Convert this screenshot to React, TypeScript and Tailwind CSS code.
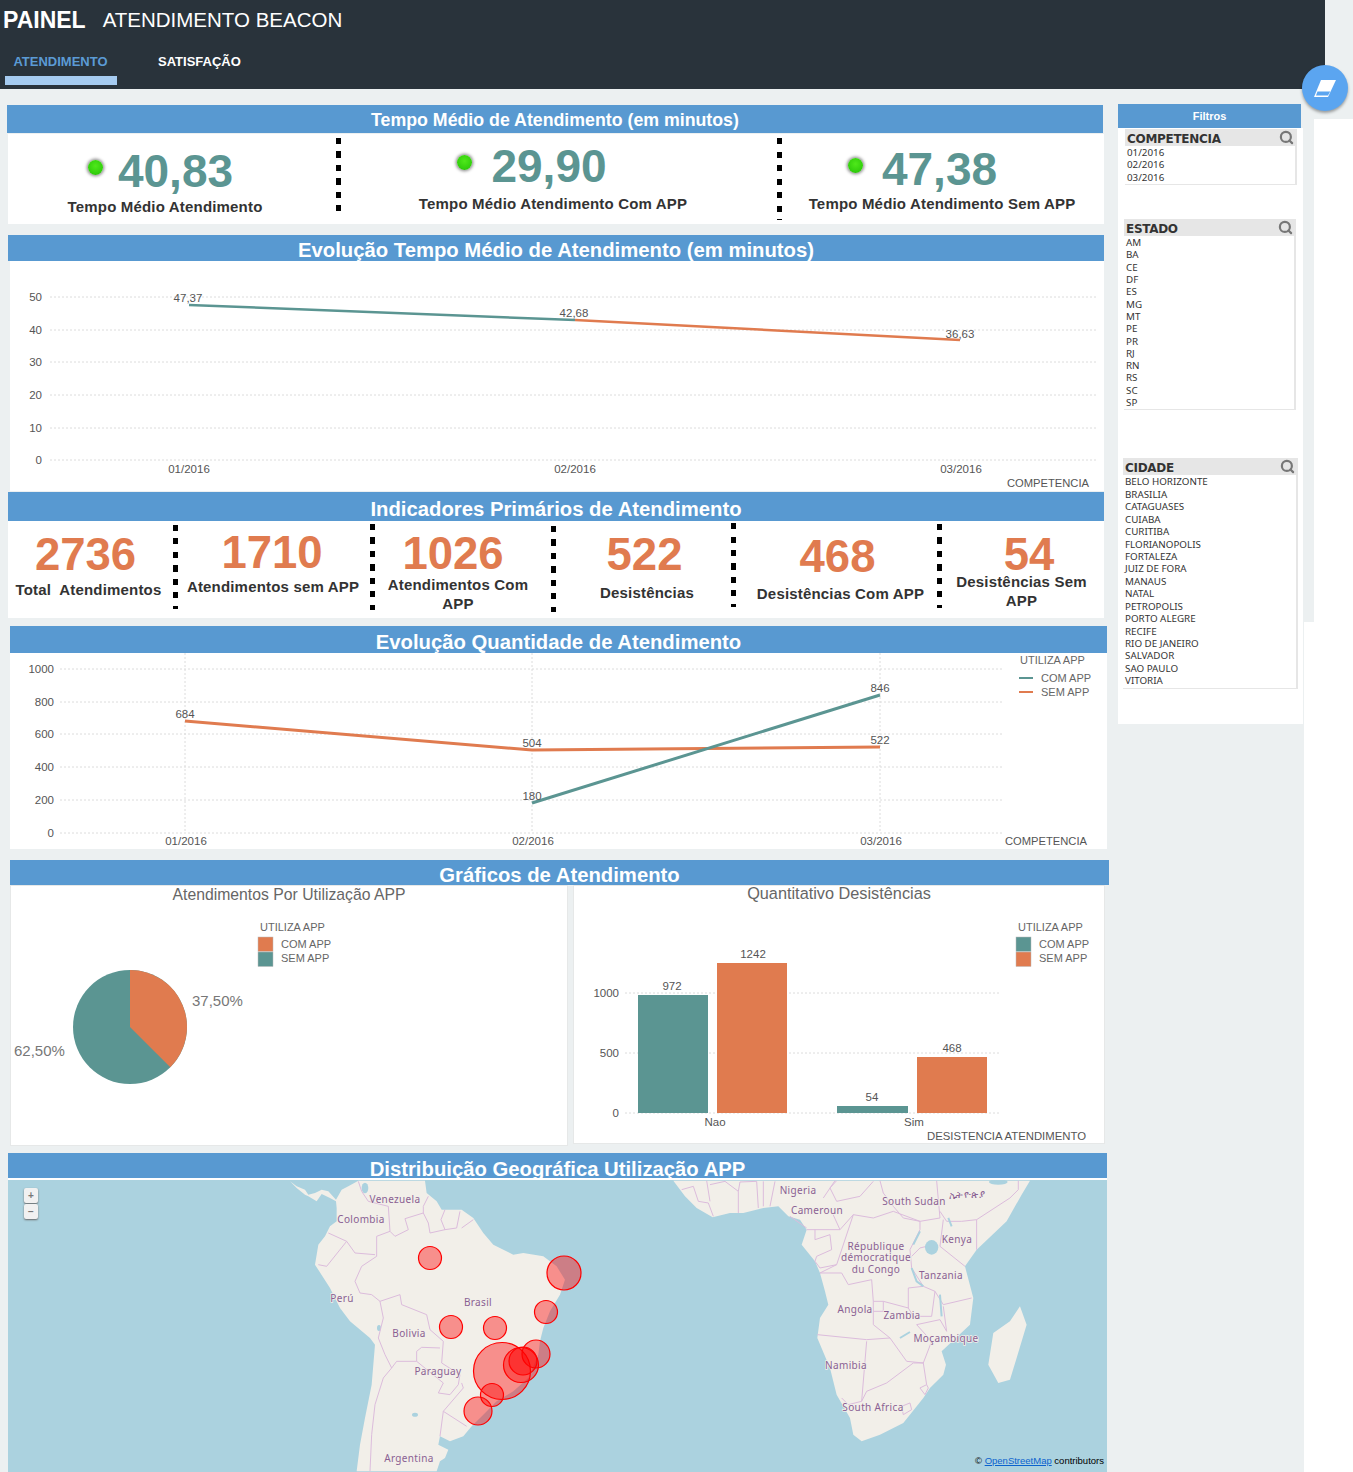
import { Search } from "lucide-react";

const TEAL = "#5b9592";
const ORANGE = "#e07b4f";
const WATER = "#abd2df";

const ESTADOS = ["AM", "BA", "CE", "DF", "ES", "MG", "MT", "PE", "PR", "RJ", "RN", "RS", "SC", "SP"];
const CIDADES = [
	"BELO HORIZONTE", "BRASILIA", "CATAGUASES", "CUIABA", "CURITIBA", "FLORIANOPOLIS", "FORTALEZA",
	"JUIZ DE FORA", "MANAUS", "NATAL", "PETROPOLIS", "PORTO ALEGRE", "RECIFE", "RIO DE JANEIRO",
	"SALVADOR", "SAO PAULO", "VITORIA",
];

const CIRCLES = [
	[430, 1258, 11.5], [564, 1273, 17], [546, 1312, 11.5], [451, 1327, 11.5], [495, 1328, 11.5],
	[536, 1354, 14], [502, 1371, 28.5], [521, 1365, 17.5], [523, 1361, 14], [492, 1395, 11.5], [478, 1411, 14],
];

const MAP_LABELS: [string, number, number][] = [
	["Venezuela", 395, 1199], ["Colombia", 361, 1219], ["Perú", 342, 1298], ["Brasil", 478, 1302],
	["Bolivia", 409, 1333], ["Paraguay", 438, 1371], ["Argentina", 409, 1458], ["Nigeria", 798, 1190],
	["Cameroun", 817, 1210], ["South Sudan", 914, 1201], ["ኢትዮጵያ", 967, 1194], ["Kenya", 957, 1239],
	["République", 876, 1246], ["démocratique", 876, 1257], ["du Congo", 876, 1269], ["Tanzania", 941, 1275],
	["Angola", 855, 1309], ["Zambia", 902, 1315], ["Moçambique", 946, 1338], ["Namibia", 846, 1365],
	["South Africa", 873, 1407],
];

const SOUTH_AMERICA =
	"M30 10 50 25 75 35 85 50 105 45 125 35 145 40 168 65 185 35 205 25 235 8 435 8 440 45 470 70 485 95 545 95 580 120 610 165 640 200 700 230 730 225 790 235 830 265 855 305 840 350 810 400 790 450 780 490 775 530 745 600 700 640 650 670 610 710 575 745 550 775 510 790 480 775 475 800 505 815 495 840 480 850 470 880 230 880 240 800 255 720 275 620 285 500 270 480 210 430 180 390 150 330 105 260 115 200 135 175 150 145 170 130 170 90 168 70 150 60 125 48 110 70 85 55 75 50 50 30Z";

const SA_BORDERS = [
	"M235 10 245 40 265 70 325 85 330 160 345 175 385 155 375 122 430 105 445 135 450 165 495 155 483 125 495 95",
	"M430 105 430 85 445 55M495 155 530 150 540 100M545 150 580 125",
	"M330 160 290 175 290 235 245 265 225 310 240 345 275 350 300 370 360 350 365 380 440 410 450 455 490 490 485 555 540 590 535 620 510 650 475 645 490 615 410 550 410 520 425 508 480 510",
	"M145 165 200 190 225 225 285 230M115 260 140 265 200 190",
	"M300 370 310 420 295 480 315 530 335 570 350 550 410 550M335 570 310 600 285 680 275 770 270 880",
	"M545 615 550 630 490 700 560 745M490 700 480 775",
];

const AFRICA =
	"M40 8 75 55 110 90 158 118 210 105 250 105 310 90 355 85 385 115 420 125 440 155 425 200 465 250 480 285 495 340 505 380 480 420 472 480 510 570 530 650 570 720 580 770 605 790 660 770 730 735 790 660 810 630 850 590 858 560 845 520 930 440 940 360 915 265 950 215 1040 130 1085 50 1110 8Z";

const AF_BORDERS = [
	"M65 35 100 25 115 70 145 75 160 115M140 8 150 70M150 20 195 10 235 40 235 105M235 40 240 12 290 10 295 90M310 85 310 10M330 85 345 10",
	"M490 60 525 8M530 70 510 30 530 8M530 70 600 55 640 10M660 8 670 45 700 85 730 120 780 130 840 120 830 8M840 100 860 130 905 130 950 125 1050 60 1075 35 1075 8",
	"M440 155 510 155 540 155 580 110 640 120 700 100 780 130M515 100 540 155M390 115 440 150",
	"M465 155 465 185 510 170 515 215 470 235 465 250 480 270 530 260 580 110M530 260 480 285 545 285 565 320 635 305 640 370 670 370 745 390 745 330 790 325 755 270 750 215 780 155 780 130",
	"M850 125 840 205 915 265M950 125 950 215M800 205 780 210 755 235",
	"M790 325 825 340 850 380 935 360M745 390 760 415 815 415 825 340",
	"M472 470 620 485 690 480 640 440 640 370M640 400 670 400 670 370",
	"M620 490 605 670 620 640 680 615 760 555 790 555 815 490 770 440 840 425 860 460 850 385",
	"M690 480 740 550 790 555 800 620 780 630 795 650 805 630 800 620",
	"M545 660 565 680 605 670M725 685 750 675 755 695 730 710 725 685",
];

function TitleBar({ title, className }: { title: string; className: string }) {
	return (
		<div
			className={`flex justify-center overflow-hidden bg-[#5899d1] font-bold text-white leading-[24px] ${className}`}
		>
			{title}
		</div>
	);
}

function Separator({ className }: { className: string }) {
	return (
		<div
			className={`w-[5px] shrink-0 bg-[repeating-linear-gradient(to_bottom,#000_0,#000_6px,transparent_6px,transparent_13.5px)] ${className}`}
		/>
	);
}

function Led() {
	return (
		<div className="mb-[8px] flex h-[18px] w-[18px] shrink-0 items-center justify-center">
			<div className="h-[15px] w-[15px] rounded-full bg-[radial-gradient(circle_at_50%_40%,#4fe81a,#32cf0c_65%,#1f8f08)] shadow-[0_0_3px_1.5px_#999]" />
		</div>
	);
}

function TimeKpi({
	value,
	label,
	className,
	labelClass,
	rowClass,
}: {
	value: string;
	label: string;
	className: string;
	labelClass: string;
	rowClass: string;
}) {
	return (
		<div className={`flex flex-col items-center ${className}`}>
			<div className={`flex h-[50px] items-center ${rowClass}`}>
				<Led />
				<span className="text-[46px] font-bold leading-[50px] text-[#5b9592]">{value}</span>
			</div>
			<div className={`text-[15px] font-bold leading-[18px] tracking-[0.18px] text-[#333] ${labelClass}`}>
				{label}
			</div>
		</div>
	);
}

function CountKpi({
	value,
	label,
	className,
	valueClass,
	labelClass,
}: {
	value: string;
	label: string;
	className: string;
	valueClass: string;
	labelClass: string;
}) {
	return (
		<div className={`flex shrink-0 flex-col items-center text-center ${className}`}>
			<div className={`text-[45.5px] font-bold leading-[50px] text-[#e07b4f] ${valueClass}`}>{value}</div>
			<div className={`text-[15px] font-bold leading-[19px] tracking-[0.18px] text-[#333] ${labelClass}`}>
				{label}
			</div>
		</div>
	);
}

function FilterList({
	title,
	items,
	className,
	rowClass,
}: {
	title: string;
	items: string[];
	className: string;
	rowClass: string;
}) {
	return (
		<div className={`border-b border-r-2 border-[#e6e6e6] ${className}`}>
			<div className="flex h-[17px] items-center justify-between bg-[#e6e6e6] pl-[2px] pr-px">
				<span className="pt-[2px] font-['DejaVu_Sans'] text-[12px] font-bold leading-none tracking-[-0.3px] text-[#333]">
					{title}
				</span>
				<Search size={15} strokeWidth={3.5} className="text-[#777]" />
			</div>
			<div className="pl-[2px] pt-px font-['Noto_Sans'] text-[9.8px] text-[#333]">
				{items.map((item) => (
					<div key={item} className={rowClass}>
						{item}
					</div>
				))}
			</div>
		</div>
	);
}

function Grid({ ys, x1, x2 }: { ys: number[]; x1: number; x2: number }) {
	return (
		<g stroke="#dcdcdc" strokeDasharray="2 2">
			{ys.map((y) => (
				<line key={y} x1={x1} x2={x2} y1={y} y2={y} />
			))}
		</g>
	);
}

function Legend({ x, swatches }: { x: number; swatches: [string, string][] }) {
	return (
		<g fontSize="11" fill="#666">
			<text x={x + 2} y="931">
				UTILIZA APP
			</text>
			{swatches.map(([color, label], i) => (
				<g key={label}>
					<rect x={x} y={937 + i * 15} width="15" height="14.5" fill={color} stroke="#bbb" strokeWidth="0.5" />
					<text x={x + 23} y={948 + i * 14}>
						{label}
					</text>
				</g>
			))}
		</g>
	);
}

function AverageChart() {
	return (
		<svg viewBox="10 261 1094 230" className="block h-[230px] w-[1094px] font-['Liberation_Sans']" fontSize="11.5" fill="#555">
			<Grid ys={[297, 330, 362, 395, 428, 460]} x1={50} x2={1097} />
			{[["50", 297], ["40", 330], ["30", 362], ["20", 395], ["10", 428], ["0", 460]].map(([t, y]) => (
				<text key={t} x="42" y={Number(y) + 4} textAnchor="end">
					{t}
				</text>
			))}
			<line x1="189" y1="305" x2="575" y2="320" stroke={TEAL} strokeWidth="2.5" />
			<line x1="575" y1="320" x2="960" y2="340" stroke={ORANGE} strokeWidth="2.5" />
			<text x="188" y="302" textAnchor="middle">47,37</text>
			<text x="574" y="317" textAnchor="middle">42,68</text>
			<text x="960" y="338" textAnchor="middle">36,63</text>
			<text x="189" y="473" textAnchor="middle">01/2016</text>
			<text x="575" y="473" textAnchor="middle">02/2016</text>
			<text x="961" y="473" textAnchor="middle">03/2016</text>
			<text x="1089" y="487" textAnchor="end" fontSize="11.2">COMPETENCIA</text>
		</svg>
	);
}

function QuantityChart() {
	return (
		<svg viewBox="10 653 1097 196" className="block h-[196px] w-[1097px] font-['Liberation_Sans']" fontSize="11.5" fill="#555">
			<Grid ys={[669, 702, 734, 767, 800, 833]} x1={60} x2={1002} />
			<g stroke="#dcdcdc" strokeDasharray="2 2">
				<line x1="185" x2="185" y1="653" y2="833" />
				<line x1="532" x2="532" y1="653" y2="833" />
				<line x1="880" x2="880" y1="653" y2="833" />
			</g>
			{[["1000", 669], ["800", 702], ["600", 734], ["400", 767], ["200", 800], ["0", 833]].map(([t, y]) => (
				<text key={t} x="54" y={Number(y) + 4} textAnchor="end">
					{t}
				</text>
			))}
			<polyline points="185,721 532,750 880,747" fill="none" stroke={ORANGE} strokeWidth="3" />
			<line x1="532" y1="803" x2="880" y2="695" stroke={TEAL} strokeWidth="3" />
			<text x="185" y="718" textAnchor="middle">684</text>
			<text x="532" y="747" textAnchor="middle">504</text>
			<text x="532" y="800" textAnchor="middle">180</text>
			<text x="880" y="692" textAnchor="middle">846</text>
			<text x="880" y="744" textAnchor="middle">522</text>
			<text x="186" y="845" textAnchor="middle">01/2016</text>
			<text x="533" y="845" textAnchor="middle">02/2016</text>
			<text x="881" y="845" textAnchor="middle">03/2016</text>
			<text x="1087" y="845" textAnchor="end" fontSize="11.2">COMPETENCIA</text>
			<g fill="#666" fontSize="11">
				<text x="1020" y="664">UTILIZA APP</text>
				<line x1="1019" x2="1033" y1="678" y2="678" stroke={TEAL} strokeWidth="2" />
				<line x1="1019" x2="1033" y1="692" y2="692" stroke={ORANGE} strokeWidth="2" />
				<text x="1041" y="682">COM APP</text>
				<text x="1041" y="696">SEM APP</text>
			</g>
		</svg>
	);
}

function PieChart() {
	return (
		<svg viewBox="10 903 558 243" className="block h-[243px] w-[558px] font-['Liberation_Sans']">
			<Legend x={258} swatches={[[ORANGE, "COM APP"], [TEAL, "SEM APP"]]} />
			<circle cx="130" cy="1027" r="57" fill={TEAL} />
			<path d="M130 1027 L130 970 A57 57 0 0 1 170.3 1067.3 Z" fill={ORANGE} />
			<text x="192" y="1006" fontSize="15" fill="#777">37,50%</text>
			<text x="14" y="1056" fontSize="15" fill="#777">62,50%</text>
		</svg>
	);
}

function BarChart() {
	return (
		<svg viewBox="573 903 532 241" className="block h-[241px] w-[532px] font-['Liberation_Sans']" fontSize="11.5" fill="#555">
			<Grid ys={[993, 1053, 1113]} x1={625} x2={999} />
			<text x="619" y="997" textAnchor="end">1000</text>
			<text x="619" y="1057" textAnchor="end">500</text>
			<text x="619" y="1117" textAnchor="end">0</text>
			<rect x="638" y="995" width="70" height="118" fill={TEAL} />
			<rect x="717" y="963" width="70" height="150" fill={ORANGE} />
			<rect x="837" y="1106" width="71" height="7" fill={TEAL} />
			<rect x="917" y="1057" width="70" height="56" fill={ORANGE} />
			<text x="672" y="990" textAnchor="middle">972</text>
			<text x="753" y="958" textAnchor="middle">1242</text>
			<text x="872" y="1101" textAnchor="middle">54</text>
			<text x="952" y="1052" textAnchor="middle">468</text>
			<text x="715" y="1126" textAnchor="middle">Nao</text>
			<text x="914" y="1126" textAnchor="middle">Sim</text>
			<text x="1086" y="1140" textAnchor="end" fontSize="11.35">DESISTENCIA ATENDIMENTO</text>
			<Legend x={1016} swatches={[[TEAL, "COM APP"], [ORANGE, "SEM APP"]]} />
		</svg>
	);
}

function ZoomButton({ label }: { label: string }) {
	return (
		<div className="flex h-[15px] w-[14px] items-center justify-center rounded-[2px] bg-[#f1f1f1] text-[10px] font-bold leading-none text-[#777] shadow-[0_1px_2px_#666]">
			{label}
		</div>
	);
}

function WorldMap() {
	return (
		<div className="relative h-[292px] w-[1099px] overflow-hidden bg-[#abd2df]">
			<svg viewBox="8 1180 1099 292" className="block h-[292px] w-[1099px]">
				{/* America do Sul */}
				<g transform="translate(280 1178) scale(0.3333)">
					<path fill="#f2efe9" d={SOUTH_AMERICA} />
					<ellipse cx="255" cy="30" rx="10" ry="16" fill={WATER} />
					<ellipse cx="297" cy="450" rx="6" ry="9" fill={WATER} />
					<ellipse cx="405" cy="710" rx="9" ry="6" fill={WATER} />
					<g fill="none" stroke="#dcbcdc" strokeWidth="1">
						{SA_BORDERS.map((d) => (
							<path key={d} d={d} vectorEffect="non-scaling-stroke" />
						))}
					</g>
				</g>
				{/* Africa */}
				<g transform="translate(660 1178) scale(0.3333)">
					<path fill="#f2efe9" d={AFRICA} />
					<path fill="#f2efe9" d="M1080 385 1100 440 1070 540 1050 605 1015 615 985 560 1000 465 1050 430Z" />
					<ellipse cx="1015" cy="12" rx="28" ry="8" fill={WATER} />
					<g fill="none" stroke="#dcbcdc" strokeWidth="1">
						{AF_BORDERS.map((d) => (
							<path key={d} d={d} vectorEffect="non-scaling-stroke" />
						))}
					</g>
					<ellipse cx="815" cy="208" rx="20" ry="22" fill={WATER} />
					<path
						d="M755 270 770 310 790 325M840 350 845 415M865 120 875 145M720 480 750 462M780 160 760 200"
						fill="none"
						stroke={WATER}
						strokeWidth="2"
						vectorEffect="non-scaling-stroke"
					/>
				</g>
				{CIRCLES.map(([cx, cy, r]) => (
					<circle key={`${cx}-${cy}`} cx={cx} cy={cy} r={r} fill="#ff0000" fillOpacity="0.4" stroke="#ff0000" strokeWidth="1.2" />
				))}
				<g
					fontSize="10"
					fill="#8a5f93"
					textAnchor="middle"
					letterSpacing="0.35"
					stroke="#f2efe9"
					strokeWidth="1.5"
					paintOrder="stroke"
					className="font-['Noto_Sans','DejaVu_Sans',sans-serif]"
				>
					{MAP_LABELS.map(([t, x, y]) => (
						<text key={t} x={x} y={y + 3.5}>
							{t}
						</text>
					))}
				</g>
			</svg>
			{/* zoom */}
			<div className="absolute left-[16px] top-[8px] flex flex-col gap-px">
				<ZoomButton label="+" />
				<ZoomButton label="−" />
			</div>
			<div className="absolute bottom-[7px] right-[3px] text-[9.5px] leading-none text-black">
				© <span className="text-[#0b63ce] underline">OpenStreetMap</span> contributors
			</div>
		</div>
	);
}

export default function App() {
	return (
		<div className="relative h-[1472px] w-[1353px] overflow-hidden bg-[#ecf0f1] font-['Liberation_Sans',sans-serif]">
			{/* Header */}
			<div className="h-[89px] w-[1325px] bg-[#29333b] text-white">
				<div className="flex items-center pl-[3px] pt-[6px] leading-[28px]">
					<span className="text-[23px] font-bold">PAINEL</span>
					<span className="ml-[17px] text-[20.5px]">ATENDIMENTO BEACON</span>
				</div>
				<div className="flex pl-[5px] pt-[15px]">
					<div className="w-[112px] text-center">
						<div className="pr-[1px] text-[13px] font-bold leading-[26px] text-[#5b9bd5]">ATENDIMENTO</div>
						<div className="mt-px h-[9px] bg-[#a5cbf0]" />
					</div>
					<div className="ml-[41px] text-[13px] font-bold leading-[26px]">SATISFAÇÃO</div>
				</div>
			</div>

			<div className="flex h-[1383px]">
				{/* Main */}
				<div className="w-[1108px] shrink-0">
					<TitleBar title="Tempo Médio de Atendimento (em minutos)" className="ml-[7px] mt-[16px] h-[28px] w-[1096px] pt-[3px] text-[17.75px]" />
					<div className="ml-[8px] mt-px flex h-[90px] w-[1096px] bg-white">
						<TimeKpi value="40,83" label="Tempo Médio Atendimento" className="w-[328px] pt-[12px]" labelClass="mt-[2px] -ml-[14px]" rowClass="mr-[24px] gap-[13px]" />
						<Separator className="mt-[4px] h-[80px]" />
						<TimeKpi value="29,90" label="Tempo Médio Atendimento Com APP" className="w-[436px] pt-[7px]" labelClass="mt-[4px] -ml-[12px]" rowClass="mr-[56px] gap-[18px]" />
						<Separator className="mt-[4px] h-[82px]" />
						<TimeKpi value="47,38" label="Tempo Médio Atendimento Sem APP" className="w-[322px] pt-[10px]" labelClass="mt-[1px] -ml-[2px]" rowClass="mr-[42px] gap-[17px]" />
					</div>

					<TitleBar title="Evolução Tempo Médio de Atendimento (em minutos)" className="ml-[8px] mt-[11px] h-[26px] w-[1096px] pt-[3px] text-[20.3px]" />
					<div className="ml-[10px] w-[1094px] bg-white">
						<AverageChart />
					</div>

					<TitleBar title="Indicadores Primários de Atendimento" className="ml-[8px] mt-px h-[29px] w-[1096px] pt-[5px] text-[20.3px]" />
					<div className="ml-[8px] flex h-[97px] w-[1096px] bg-white">
						<CountKpi value="2736" label="Total  Atendimentos" className="w-[165px] pt-[9px]" valueClass="-ml-[10px]" labelClass="-ml-[4px] mt-0 whitespace-pre" />
						<Separator className="mt-[4px] h-[84px]" />
						<CountKpi value="1710" label="Atendimentos sem APP" className="w-[192px] pt-[7px]" valueClass="-ml-[4px]" labelClass="-ml-[2px] -mt-px whitespace-nowrap" />
						<Separator className="mt-[3px] h-[86px]" />
						<CountKpi value="1026" label="Atendimentos Com APP" className="w-[176px] pl-[10px] pr-[20px] pt-[8px]" valueClass="-ml-[10px]" labelClass="-mt-[4px]" />
						<Separator className="mt-[5px] h-[86px]" />
						<CountKpi value="522" label="Desistências" className="w-[175px] pl-[7px] pt-[9px]" valueClass="-ml-[5px]" labelClass="mt-[3px]" />
						<Separator className="mt-[2px] h-[84px]" />
						<CountKpi value="468" label="Desistências Com APP" className="w-[201px] pl-[8px] pt-[11px]" valueClass="-ml-[6px]" labelClass="mt-[2px] whitespace-nowrap" />
						<Separator className="mt-[3px] h-[84px]" />
						<CountKpi value="54" label="Desistências Sem APP" className="w-[162px] pl-[10px] pr-[13px] pt-[9px]" valueClass="ml-[15px] h-[42px]" labelClass="mt-0" />
					</div>

					<TitleBar title="Evolução Quantidade de Atendimento" className="ml-[10px] mt-[8px] h-[27px] w-[1097px] pt-[4px] text-[20.3px]" />
					<div className="ml-[10px] w-[1097px] bg-white">
						<QuantityChart />
					</div>

					<TitleBar title="Gráficos de Atendimento" className="ml-[10px] mt-[11px] h-[25px] w-[1099px] pt-[3px] text-[20.3px]" />
					<div className="ml-[10px] flex gap-[5px]">
						<div className="h-[261px] w-[558px] bg-white shadow-[inset_0_0_0_1px_#e6e8e8]">
							<div className="h-[18px] text-center text-[15.75px] leading-[20px] text-[#666]">Atendimentos Por Utilização APP</div>
							<PieChart />
						</div>
						<div className="h-[259px] w-[532px] bg-white shadow-[inset_0_0_0_1px_#e6e8e8]">
							<div className="h-[18px] text-center text-[16.3px] leading-[16px] text-[#666]">Quantitativo Desistências</div>
							<BarChart />
						</div>
					</div>

					<TitleBar title="Distribuição Geográfica Utilização APP" className="ml-[8px] mt-[7px] h-[25px] w-[1099px] pt-[4px] text-[20.3px]" />
					<div className="ml-[8px] h-[2px] w-[1099px] bg-white" />
					<div className="ml-[8px]">
						<WorldMap />
					</div>
				</div>

				{/* Filtros */}
				<div className="w-[196px] shrink-0 pl-[10px]">
					<div className="mt-[15px] flex h-[24px] w-[183px] items-center justify-center bg-[#5899d1] text-[11px] font-bold text-white">
						Filtros
					</div>
					<div className="h-[596px] w-[185px] bg-white pt-px">
						<FilterList title="COMPETENCIA" items={["01/2016", "02/2016", "03/2016"]} className="ml-[7px] w-[172px]" rowClass="h-[12.4px] leading-[12.4px]" />
						<FilterList title="ESTADO" items={ESTADOS} className="ml-[6px] mt-[34px] w-[172px]" rowClass="h-[12.3px] leading-[12.3px]" />
						<FilterList title="CIDADE" items={CIDADES} className="ml-[5px] mt-[48px] w-[175px]" rowClass="h-[12.45px] leading-[12.45px]" />
					</div>
				</div>

				{/* Faixa direita */}
				<div className="flex-1 bg-white">
					<div className="h-[30px] bg-[#ecf0f1]" />
					<div className="h-[503px] w-[10px] bg-[#ecf0f1]" />
				</div>
			</div>

			{/* Limpar filtros */}
			<div className="absolute left-[1302px] top-[65px] flex h-[46px] w-[46px] items-center justify-center rounded-full bg-[#5ba5f0] shadow-[0_2px_3px_rgba(0,0,0,0.35)]">
				<svg width="24" height="19" viewBox="0 0 24 19">
					<path d="M8 1H23L15 18H1Z" fill="#fff" />
					<path d="M4.5 12.5H17.2L15 16.6H3Z" fill="#5ba5f0" />
				</svg>
			</div>
		</div>
	);
}
